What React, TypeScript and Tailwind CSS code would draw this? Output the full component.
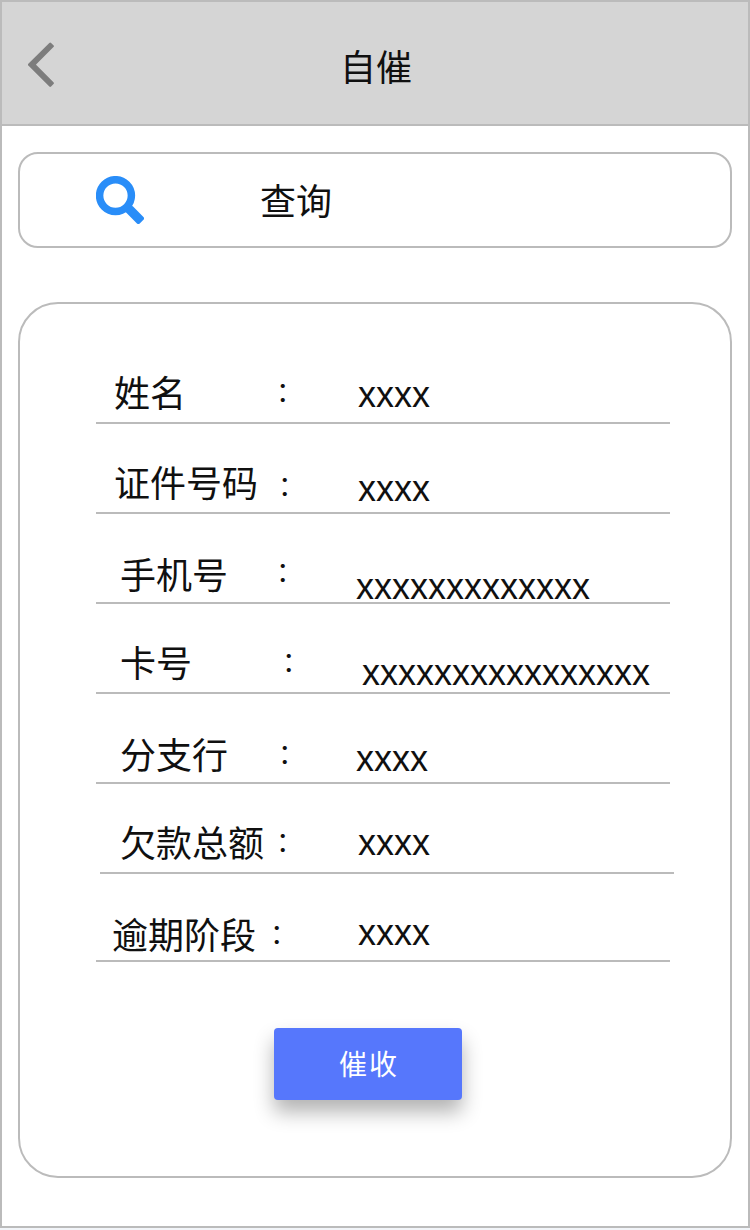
type Field = {
  name: string;
  value: string;
  row: string;
  label: string;
  colon: string;
  text: string;
};

const fields: Field[] = [
  { name: '姓名', value: 'xxxx', row: 'h-[90px] ml-[76px]', label: 'ml-[18px] w-[162px] mt-[43px]', colon: 'w-[82px] mt-[39px]', text: 'mt-[43px]' },
  { name: '证件号码', value: 'xxxx', row: 'h-[90px] ml-[76px]', label: 'ml-[18px] w-[164px] mt-[43px]', colon: 'w-[80px] mt-[43px]', text: 'mt-[47px]' },
  { name: '手机号', value: 'xxxxxxxxxxxxx', row: 'h-[90px] ml-[76px]', label: 'ml-[24px] w-[156px] mt-[45px]', colon: 'w-[80px] mt-[39px]', text: 'mt-[55px] h-[33px]' },
  { name: '卡号', value: 'xxxxxxxxxxxxxxxx', row: 'h-[90px] ml-[76px]', label: 'ml-[24px] w-[162px] mt-[43px]', colon: 'w-[80px] mt-[39px]', text: 'mt-[51px]' },
  { name: '分支行', value: 'xxxx', row: 'h-[90px] ml-[76px]', label: 'ml-[24px] w-[158px] mt-[45px]', colon: 'w-[78px] mt-[41px]', text: 'mt-[47px]' },
  { name: '欠款总额', value: 'xxxx', row: 'h-[90px] ml-[80px]', label: 'ml-[20px] w-[156px] mt-[43px]', colon: 'w-[82px] mt-[39px]', text: 'mt-[41px]' },
  { name: '逾期阶段', value: 'xxxx', row: 'h-[88px] ml-[76px]', label: 'ml-[16px] w-[158px] mt-[45px]', colon: 'w-[88px] mt-[41px]', text: 'mt-[41px]' },
];

function BackIcon() {
  return (
    <svg className="ml-[26px] mt-[40px] h-[46px] w-[28px] shrink-0" viewBox="0 0 28 46">
      <path
        d="M22.2 1.8 24.6 4.2 6.2 22.7 24.6 41.2 22.2 43.6 1.2 22.7Z"
        fill="#7d7d7d"
        stroke="#7d7d7d"
        strokeWidth="2.5"
        strokeLinejoin="round"
      />
    </svg>
  );
}

function SearchIcon() {
  return (
    <svg className="ml-[76px] h-[48px] w-[48px] shrink-0" viewBox="0 0 48 48" fill="none">
      <circle cx="19.5" cy="19.6" r="15.9" stroke="#298df8" strokeWidth="7.5" />
      <rect x="45.5" y="-4.6" width="19" height="9.2" rx="2" transform="rotate(45)" fill="#298df8" />
    </svg>
  );
}

export default function App() {
  return (
    <div className="h-[1230px] w-[750px] bg-[#f2f5f9] font-['Liberation_Sans','Noto_Sans_CJK_SC',sans-serif] text-[36px] leading-9 text-[#101010]">
      <div className="flex h-[1228px] flex-col border-2 border-[#bbbbbb] bg-white">
        <header className="grid h-[124px] shrink-0 grid-cols-[250px_1fr_250px] border-b-2 border-[#bbbbbb] bg-[#d5d5d5]">
          <BackIcon />
          <h1 className="mt-[49px] pl-[2px] text-center">自催</h1>
        </header>

        <div className="mx-4 mt-[26px] flex h-[96px] shrink-0 items-center rounded-[20px] border-2 border-[#bbbbbb]">
          <SearchIcon />
          <span className="ml-[116px] pt-[5px]">查询</span>
        </div>

        <main className="mx-4 mt-[54px] flex h-[876px] shrink-0 flex-col rounded-[40px] border-2 border-[#bbbbbb] pt-[30px]">
          {fields.map((f) => (
            <div key={f.name} className={`flex w-[574px] shrink-0 items-start whitespace-nowrap border-b-2 border-[#bbbbbb] ${f.row}`}>
              <span className={`shrink-0 ${f.label}`}>{f.name}</span>
              <span className={`shrink-0 font-['Noto_Sans_CJK_SC',sans-serif] text-[27px] leading-9 ${f.colon}`}>：</span>
              <span className={f.text}>{f.value}</span>
            </div>
          ))}
          <button className="ml-[254px] mt-[66px] h-[72px] w-[188px] rounded-[4px] bg-[#5677fc] pl-[2px] pt-[3px] text-center text-[28px] leading-[69px] tracking-[2px] text-white shadow-[0_12px_20px_rgba(0,0,0,0.3)]">
            催收
          </button>
        </main>
      </div>
    </div>
  );
}
